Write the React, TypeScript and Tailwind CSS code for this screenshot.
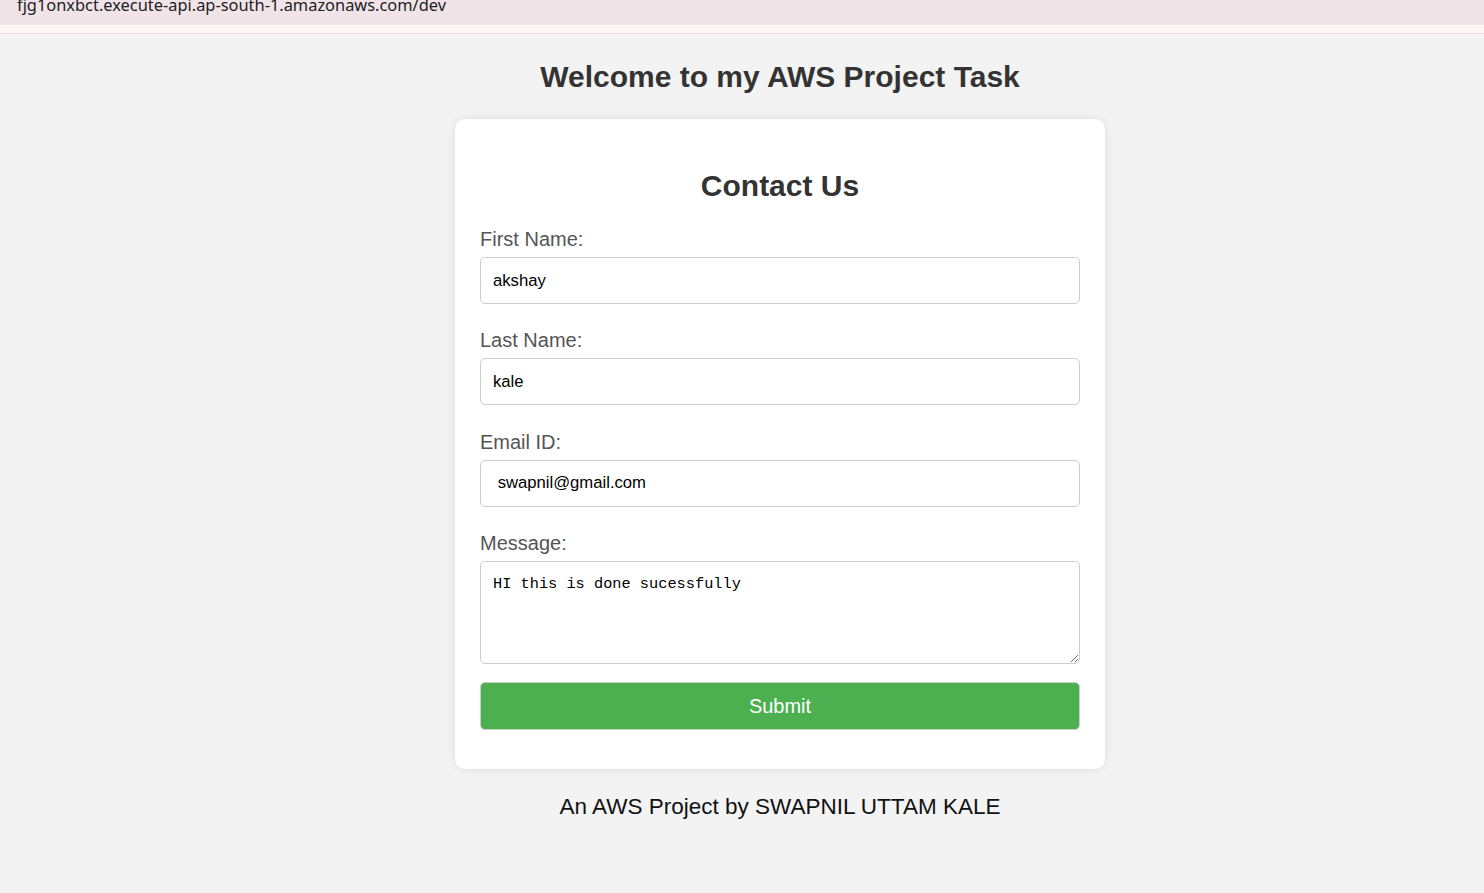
import React from "react";

interface FieldProps {
    label: string;
    value: string;
};

const Field: React.FC<FieldProps> = ({ label, value }) => {
    return (
        <div className="mb-[24.33px]">
            <label className="block pt-[1px] text-[20px] leading-[23px] text-[#555] mb-[6px]">
                {label}
            </label>
            <input
                type="text"
                defaultValue={value}
                className="
                    block
                    w-full
                    h-[47px]
                    px-[12px]
                    border
                    border-[#ccc]
                    rounded-[5px]
                    bg-white
                    text-[16.67px]
                    text-black
                    outline-none
                "
            />
        </div>
    );
};

export default function App() {
    return (
        <div className="min-h-screen bg-[#f3f3f3] font-['Liberation_Sans',Arial,sans-serif]">
            {/* browser address strip, cut off at the top */}
            <div className="h-[25px] bg-[#f1e4e8] overflow-hidden pl-[17px]">
                <div className="-mt-[7px] text-[16.4px] leading-[24px] text-[#202124] font-['Noto_Sans',sans-serif]">
                    fjg1onxbct.execute-api.ap-south-1.amazonaws.com/dev
                </div>
            </div>
            <div className="h-[9px] bg-[#fdf5f4] border-b border-[#f5dcdc]"></div>

            <div className="pl-[76px]">
                <h1 className="mt-[26px] text-center text-[30px] leading-[34px] font-bold text-[#333]">
                    Welcome to my AWS Project Task
                </h1>

                <div className="mx-auto mt-[25px] w-[650px] bg-white rounded-[10px] shadow-[0_0_10px_rgba(0,0,0,0.1)] px-[25px] pt-[50px] pb-[39px]">
                    <h2 className="text-center text-[30px] leading-[34px] font-bold text-[#333] mb-[24px]">
                        Contact Us
                    </h2>

                    <Field label="First Name:" value="akshay" />
                    <Field label="Last Name:" value="kale" />
                    <Field label="Email ID:" value=" swapnil@gmail.com" />

                    <div>
                        <label className="block pt-[1px] text-[20px] leading-[23px] text-[#555] mb-[6px]">
                            Message:
                        </label>
                        <textarea
                            defaultValue="HI this is done sucessfully"
                            className="
                                block
                                w-full
                                h-[103px]
                                px-[12px]
                                pt-[13px]
                                pb-[12px]
                                border
                                border-[#ccc]
                                rounded-[5px]
                                bg-white
                                text-[15.3px]
                                leading-[18px]
                                text-black
                                font-['Liberation_Mono',monospace]
                                outline-none
                            "
                        />
                    </div>

                    <button
                        type="button"
                        className="
                            mt-[18px]
                            block
                            w-full
                            h-[48px]
                            bg-[#4caf50]
                            border
                            border-[#c9cfc9]
                            rounded-[5px]
                            text-white
                            text-[20px]
                        "
                    >
                        Submit
                    </button>
                </div>

                <p className="mt-[25px] text-center text-[22.5px] leading-[25px] text-[#111]">
                    An AWS Project by SWAPNIL UTTAM KALE
                </p>
            </div>
        </div>
    );
}
